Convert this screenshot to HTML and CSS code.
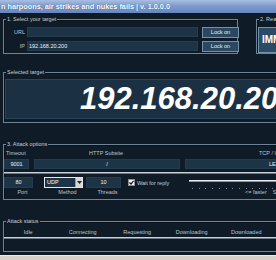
FILE: index.html
```html
<!DOCTYPE html>
<html>
<head>
<meta charset="utf-8">
<link rel="stylesheet" href="styles.css">
</head>
<body>
<div class="titlebar">n harpoons, air strikes and nukes fails | v. 1.0.0.0</div>
<div class="main">
  <div class="row1">
    <div class="group g1">
      <span class="legend">1. Select your target</span>
      <div class="target-grid">
        <span class="lbl">URL</span><div class="field"></div><div class="btn">Lock on</div>
        <span class="lbl">IP</span><div class="field">192.168.20.200</div><div class="btn">Lock on</div>
      </div>
    </div>
    <div class="group g2">
      <span class="legend">2. Ready?</span>
      <div class="fire">IMMA CHARGIN MAH LAZER</div>
    </div>
  </div>

  <div class="group g3">
    <span class="legend">Selected target</span>
    <div class="bigfield">192.168.20.200</div>
  </div>

  <div class="group g4">
    <span class="legend">3. Attack options</span>
    <div class="opt-grid">
      <span class="olbl timeout-l">Timeout</span>
      <span class="olbl http-l">HTTP Subsite</span>
      <span class="olbl tcp-l">TCP / UDP message</span>
      <div class="field c">9001</div>
      <div class="field c">/</div>
      <div class="field msg">LEL U DUN GOOFED</div>
    </div>
    <div class="sep"></div>
    <div class="lower">
      <div class="lower-left">
        <div class="rowc">
          <div class="field c port">80</div>
          <div class="select"><span class="sel-text">UDP</span><span class="sel-btn"><svg width="5" height="3" viewBox="0 0 5 3"><path d="M0 0H5L2.5 3Z" fill="#222"/></svg></span></div>
          <div class="field c threads">10</div>
          <div class="check"><svg width="5" height="5" viewBox="0 0 5 5"><path d="M0.5 2.5L2 4L4.5 0.8" stroke="#111" stroke-width="1.2" fill="none"/></svg></div>
          <span class="wait">Wait for reply</span>
        </div>
        <div class="rowd">
          <span class="dl port-l">Port</span>
          <span class="dl method-l">Method</span>
          <span class="dl threads-l">Threads</span>
        </div>
      </div>
      <div class="slider">
        <div class="track"></div>
        <div class="ticks"></div>
        <div class="speed"><span>&lt;= faster</span><span>Speed</span></div>
      </div>
    </div>
  </div>

  <div class="group g5">
    <span class="legend">Attack status</span>
    <div class="status-head">
      <span>Idle</span><span>Connecting</span><span>Requesting</span><span>Downloading</span><span>Downloaded</span><span>Requested</span>
    </div>
    <div class="status-line"></div>
  </div>
</div>
<div class="bottombar"></div>
</body>
</html>
```

FILE: styles.css
```css
html, body {
  margin: 0;
  padding: 0;
}
body {
  width: 276px;
  height: 260px;
  overflow: hidden;
  background: #0f1b26;
  font-family: "Liberation Sans", Arial, sans-serif;
  font-size: 5.5px;
  color: #b9c7d2;
  position: relative;
}
.titlebar {
  height: 13px;
  line-height: 13px;
  background: linear-gradient(#a8bfe3 0%, #7e9ccc 45%, #6486c0 100%);
  color: #ffffff;
  font-weight: bold;
  font-size: 7.3px;
  white-space: nowrap;
  padding-left: 1px;
  text-shadow: 0 0 1px #2a4a80;
}
.main {
  padding-left: 3px;
  width: 420px;
}
.group {
  position: relative;
  border: 1px solid #6c8497;
  box-shadow: inset 1px 1px 0 #0a131b;
  box-sizing: border-box;
}
.legend {
  position: absolute;
  top: -4px;
  left: 2px;
  line-height: 7px;
  padding: 0 1px;
  background: #0f1b26;
  color: #c4d0da;
  white-space: nowrap;
}
.row1 {
  display: flex;
  margin-top: 6px;
  gap: 18px;
}
.g1 {
  width: 235px;
  height: 35px;
  padding: 7px 2px 2px 0;
}
.target-grid {
  display: grid;
  grid-template-columns: 19px 171px 37px;
  grid-template-rows: 10px 10px;
  column-gap: 4px;
  row-gap: 4px;
}
.lbl {
  text-align: right;
  padding-right: 2px;
  line-height: 10px;
  margin-right: -4px;
}
.field {
  background: #1d3447;
  box-shadow: inset 0 0 0 1px #223d52;
  color: #eef3f7;
  line-height: 10px;
  height: 10px;
  padding-left: 2px;
  white-space: nowrap;
  overflow: hidden;
}
.field.c {
  text-align: center;
  padding-left: 0;
}
.field.msg {
  text-align: left;
  padding-left: 84px;
}
.btn {
  background: #2a4862;
  border: 1px solid #7591a8;
  box-sizing: border-box;
  color: #e8eef3;
  text-align: center;
  line-height: 9px;
  height: 11px;
}
.g2 {
  width: 150px;
  height: 35px;
  padding: 7px 0 0 1px;
}
.fire {
  height: 26px;
  background: #2c4a65;
  border: 1px solid #7591a8;
  box-sizing: border-box;
  color: #ffffff;
  font-weight: bold;
  font-size: 10px;
  line-height: 24px;
  padding-left: 3px;
  white-space: nowrap;
}
.g3 {
  width: 400px;
  height: 51px;
  margin-top: 18px;
  padding: 6px 0 3px 1px;
}
.bigfield {
  height: 40px;
  background: #1b3143;
  box-shadow: inset 0 0 0 1px #2b4659;
  color: #ffffff;
  font-weight: bold;
  font-style: italic;
  font-size: 31px;
  line-height: 40px;
  padding-left: 75px;
  white-space: nowrap;
}
.g4 {
  width: 400px;
  height: 56px;
  margin-top: 21px;
  padding: 4px 0 2px 0;
}
.opt-grid {
  display: grid;
  grid-template-columns: 25px 146px 200px;
  grid-template-rows: 8px 10px;
  column-gap: 5px;
  row-gap: 2px;
}
.olbl {
  line-height: 8px;
  white-space: nowrap;
}
.timeout-l {
  padding-left: 2px;
}
.http-l {
  padding-left: 55px;
}
.tcp-l {
  padding-left: 74px;
}
.sep {
  height: 2px;
  margin: 3px 0;
  background: linear-gradient(#c9d0d6 0 50%, #6b7884 50% 100%);
}
.lower {
  display: flex;
}
.lower-left {
  width: 185px;
}
.rowc {
  display: flex;
  align-items: center;
  height: 11px;
}
.rowc .field {
  height: 11px;
  line-height: 11px;
}
.port {
  width: 29px;
}
.select {
  margin-left: 11px;
  width: 39px;
  height: 11px;
  box-sizing: border-box;
  border: 1px solid #e4e6e8;
  background: #1d3447;
  display: flex;
  color: #ffffff;
}
.sel-text {
  flex: 1;
  line-height: 9px;
  padding-left: 2px;
}
.sel-btn {
  width: 6px;
  background: #d6d6d2;
  border-left: 1px solid #9a9a96;
  display: flex;
  align-items: center;
  justify-content: center;
}
.threads {
  margin-left: 3px;
  width: 35px;
}
.check {
  margin-left: 7px;
  width: 7px;
  height: 7px;
  box-sizing: border-box;
  background: #f4f4f4;
  border: 1px solid #8a8a8a;
  display: flex;
  align-items: center;
  justify-content: center;
}
.wait {
  margin-left: 2px;
  white-space: nowrap;
  color: #c4d0da;
}
.rowd {
  display: flex;
  height: 9px;
  line-height: 9px;
}
.dl {
  text-align: center;
}
.port-l {
  width: 29px;
  padding-left: 4px;
}
.method-l {
  margin-left: 11px;
  width: 39px;
}
.threads-l {
  margin-left: 3px;
  width: 35px;
}
.slider {
  flex: 1;
  height: 20px;
}
.track {
  margin-top: 3px;
  height: 2px;
  background: linear-gradient(#e9ecee 0 50%, #8c969e 50% 100%);
}
.ticks {
  margin-top: 6px;
  margin-left: 3px;
  height: 1px;
  background: repeating-linear-gradient(90deg, #7d8a95 0 1px, transparent 1px 6.7px);
}
.speed {
  display: flex;
  gap: 6px;
  padding-left: 56px;
  line-height: 7px;
  margin-top: 0;
  white-space: nowrap;
}
.g5 {
  width: 400px;
  height: 31px;
  margin-top: 21px;
  padding-top: 6px;
}
.status-head {
  display: grid;
  grid-template-columns: repeat(7, 54.5px);
  margin-left: -3px;
  line-height: 9px;
}
.status-head span {
  text-align: center;
  white-space: nowrap;
}
.status-line {
  height: 2px;
  background: linear-gradient(#c9d0d6 0 50%, #6b7884 50% 100%);
}
.bottombar {
  margin-top: 3px;
  height: 6px;
  border-top: 1px solid #eeebe4;
  background: #d6d2ca;
}
```
